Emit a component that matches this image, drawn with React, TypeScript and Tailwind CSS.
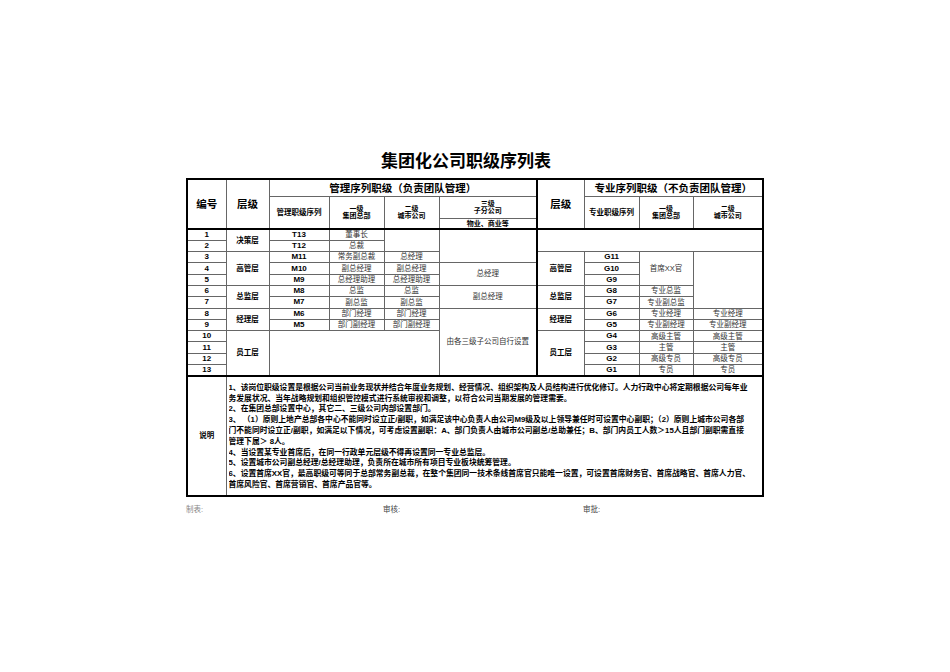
import React from "react";

const font = "font-['Liberation_Sans','Noto_Sans_CJK_SC',sans-serif]";
const c = "border border-[#666] p-0 text-center align-middle leading-none overflow-hidden";
const num = `${c} text-[8px] font-bold text-black`;
const lvl = `${c} text-[7.5px] font-bold text-black`;
const code = `${c} text-[8px] font-bold text-black`;
const txt = `${c} text-[7.5px] text-[#333]`;
const hd = `${c} font-bold text-black`;

const notes = [
  "1、该岗位职级设置是根据公司当前业务现状并结合年度业务规划、经营情况、组织架构及人员结构进行优化修订。人力行政中心将定期根据公司每年业",
  "务发展状况、当年战略规划和组织管控模式进行系统审视和调整，以符合公司当期发展的管理需要。",
  "2、在集团总部设置中心，其它二、三级公司内部设置部门。",
  "3、 （1）原则上地产总部各中心不能同时设立正/副职，如满足该中心负责人由公司M9级及以上领导兼任时可设置中心副职；（2）原则上城市公司各部",
  "门不能同时设立正/副职，如满足以下情况，可考虑设置副职：A、部门负责人由城市公司副总/总助兼任；B、部门内员工人数＞15人且部门副职需直接",
  "管理下属＞ 8人。",
  "4、当设置某专业首席后，在同一行政单元层级不得再设置同一专业总监层。",
  "5、设置城市公司副总经理/总经理助理，负责所在城市所有项目专业板块统筹管理。",
  "6、设置首席XX官，最高职级可等同于总部常务副总裁，在整个集团同一技术条线首席官只能唯一设置，可设置首席财务官、首席战略官、首席人力官、",
  "首席风险官、首席营销官、首席产品官等。",
];

const widths = [39, 43, 60, 55, 55, 98, 47, 55, 54, 70];

export default function App() {
  const row = "h-[11.3px]";
  const thickL = "border-l-2 border-l-black";
  const thickT = "border-t-2 border-t-black";
  return (
    <div className={`min-h-screen bg-white pt-[152px] ${font}`}>
      <div className="ml-[186px] w-[576px] pr-[16px] text-center text-[17px] font-bold leading-[20px] text-black mb-[6px]">
        集团化公司职级序列表
      </div>

      <table className="ml-[186px] w-[576px] table-fixed border-collapse border-2 border-black">
        <colgroup>
          {widths.map((w, i) => (
            <col key={i} style={{ width: w }} />
          ))}
        </colgroup>
        <tbody>
          <tr className="h-[17px]">
            <td rowSpan={3} className={`${hd} text-[10.5px]`}>编号</td>
            <td rowSpan={3} className={`${hd} text-[10.5px]`}>层级</td>
            <td colSpan={4} className={`${hd} text-[10.5px]`}>管理序列职级（负责团队管理）</td>
            <td rowSpan={3} className={`${hd} text-[10.5px] ${thickL}`}>层级</td>
            <td colSpan={3} className={`${hd} text-[10.5px]`}>专业序列职级（不负责团队管理）</td>
          </tr>
          <tr className="h-[22px]">
            <td rowSpan={2} className={`${hd} text-[7.5px]`}>管理职级序列</td>
            <td rowSpan={2} className={`${hd} text-[7px] leading-[9.5px]`}>一级<br />集团总部</td>
            <td rowSpan={2} className={`${hd} text-[7px] leading-[9.5px]`}>二级<br />城市公司</td>
            <td className={`${hd} text-[7px] leading-[9px]`}>三级<br />子分公司</td>
            <td rowSpan={2} className={`${hd} text-[7.5px]`}>专业职级序列</td>
            <td rowSpan={2} className={`${hd} text-[7px] leading-[9.5px]`}>一级<br />集团总部</td>
            <td rowSpan={2} className={`${hd} text-[7px] leading-[9.5px]`}>二级<br />城市公司</td>
          </tr>
          <tr className="h-[11px]">
            <td className={`${hd} text-[7px]`}>物业、商业等</td>
          </tr>

          <tr className={row}>
            <td className={`${num} ${thickT}`}>1</td>
            <td rowSpan={2} className={`${lvl} ${thickT}`}>决策层</td>
            <td className={`${code} ${thickT}`}>T13</td>
            <td className={`${txt} ${thickT}`}>董事长</td>
            <td rowSpan={2} className={`${txt} ${thickT}`}></td>
            <td rowSpan={3} className={`${txt} ${thickT}`}></td>
            <td rowSpan={2} colSpan={4} className={`${txt} ${thickT} ${thickL}`}></td>
          </tr>
          <tr className={row}>
            <td className={num}>2</td>
            <td className={code}>T12</td>
            <td className={txt}>总裁</td>
          </tr>
          <tr className={row}>
            <td className={num}>3</td>
            <td rowSpan={3} className={lvl}>高管层</td>
            <td className={code}>M11</td>
            <td className={txt}>常务副总裁</td>
            <td className={txt}>总经理</td>
            <td rowSpan={3} className={`${lvl} ${thickL}`}>高管层</td>
            <td className={code}>G11</td>
            <td rowSpan={3} className={txt}>首席XX官</td>
            <td rowSpan={5} className={txt}></td>
          </tr>
          <tr className={row}>
            <td className={num}>4</td>
            <td className={code}>M10</td>
            <td className={txt}>副总经理</td>
            <td className={txt}>副总经理</td>
            <td rowSpan={2} className={txt}>总经理</td>
            <td className={code}>G10</td>
          </tr>
          <tr className={row}>
            <td className={num}>5</td>
            <td className={code}>M9</td>
            <td className={txt}>总经理助理</td>
            <td className={txt}>总经理助理</td>
            <td className={code}>G9</td>
          </tr>
          <tr className={row}>
            <td className={num}>6</td>
            <td rowSpan={2} className={lvl}>总监层</td>
            <td className={code}>M8</td>
            <td className={txt}>总监</td>
            <td className={txt}>总监</td>
            <td rowSpan={2} className={txt}>副总经理</td>
            <td rowSpan={2} className={`${lvl} ${thickL}`}>总监层</td>
            <td className={code}>G8</td>
            <td className={txt}>专业总监</td>
          </tr>
          <tr className={row}>
            <td className={num}>7</td>
            <td className={code}>M7</td>
            <td className={txt}>副总监</td>
            <td className={txt}>副总监</td>
            <td className={code}>G7</td>
            <td className={txt}>专业副总监</td>
          </tr>
          <tr className={row}>
            <td className={num}>8</td>
            <td rowSpan={2} className={lvl}>经理层</td>
            <td className={code}>M6</td>
            <td className={txt}>部门经理</td>
            <td className={txt}>部门经理</td>
            <td rowSpan={6} className={txt}>由各三级子公司自行设置</td>
            <td rowSpan={2} className={`${lvl} ${thickL}`}>经理层</td>
            <td className={code}>G6</td>
            <td className={txt}>专业经理</td>
            <td className={txt}>专业经理</td>
          </tr>
          <tr className={row}>
            <td className={num}>9</td>
            <td className={code}>M5</td>
            <td className={txt}>部门副经理</td>
            <td className={txt}>部门副经理</td>
            <td className={code}>G5</td>
            <td className={txt}>专业副经理</td>
            <td className={txt}>专业副经理</td>
          </tr>
          <tr className={row}>
            <td className={num}>10</td>
            <td rowSpan={4} className={lvl}>员工层</td>
            <td rowSpan={4} colSpan={3} className={txt}></td>
            <td rowSpan={4} className={`${lvl} ${thickL}`}>员工层</td>
            <td className={code}>G4</td>
            <td className={txt}>高级主管</td>
            <td className={txt}>高级主管</td>
          </tr>
          <tr className={row}>
            <td className={num}>11</td>
            <td className={code}>G3</td>
            <td className={txt}>主管</td>
            <td className={txt}>主管</td>
          </tr>
          <tr className={row}>
            <td className={num}>12</td>
            <td className={code}>G2</td>
            <td className={txt}>高级专员</td>
            <td className={txt}>高级专员</td>
          </tr>
          <tr className={row}>
            <td className={num}>13</td>
            <td className={code}>G1</td>
            <td className={txt}>专员</td>
            <td className={txt}>专员</td>
          </tr>

          <tr className="h-[120px]">
            <td className={`${lvl} ${thickT}`}>说明</td>
            <td colSpan={9} className={`border border-[#666] ${thickT} p-0 pl-[2px] pt-[6px] align-top text-left`}>
              <div className="text-[7.8px] font-bold leading-[10.8px] text-black whitespace-nowrap overflow-hidden h-[112px]">
                {notes.map((l, i) => (
                  <div key={i}>{l}</div>
                ))}
              </div>
            </td>
          </tr>
        </tbody>
      </table>

      <div className="ml-[186px] mt-[8px] flex text-[7.5px] leading-[10px]">
        <div className="w-[197px] text-[#888]">制表:</div>
        <div className="w-[200px] text-[#444]">审核:</div>
        <div className="text-[#444]">审批:</div>
      </div>
    </div>
  );
}
